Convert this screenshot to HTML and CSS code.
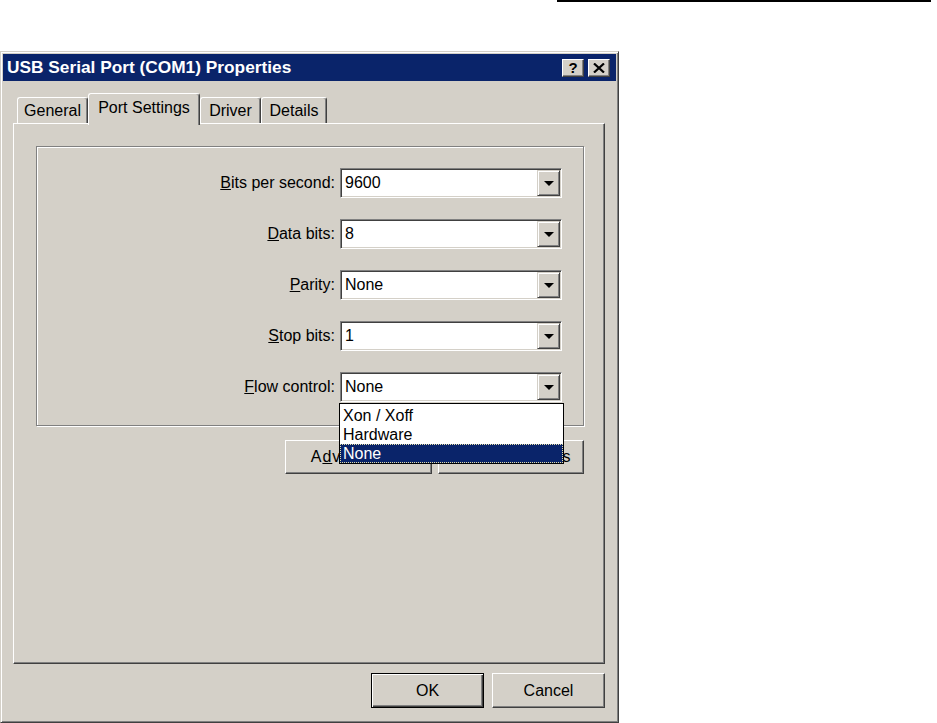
FILE: index.html
```html
<!DOCTYPE html>
<html>
<head>
<meta charset="utf-8">
<title>USB Serial Port (COM1) Properties</title>
<link rel="stylesheet" href="styles.css">
</head>
<body>
<div class="topline"></div>
<div class="dialog">
  <div class="titlebar">
    <span class="title">USB Serial Port (COM1) Properties</span>
    <div class="caption-buttons">
      <div class="cbtn help">?</div>
      <div class="cbtn close">
        <svg width="12" height="10" viewBox="0 0 12 10"><path d="M1 0.5 L11 9.5 M11 0.5 L1 9.5" stroke="#000" stroke-width="2.2" fill="none"/></svg>
      </div>
    </div>
  </div>
  <div class="content">
    <div class="tabs">
      <div class="tab t-general">General</div>
      <div class="tab t-port active">Port Settings</div>
      <div class="tab t-driver">Driver</div>
      <div class="tab t-details">Details</div>
    </div>
    <div class="panel">
      <div class="group">
        <div class="row">
          <span class="label"><u>B</u>its per second:</span>
          <div class="combo"><span class="value">9600</span><div class="drop"></div></div>
        </div>
        <div class="row">
          <span class="label"><u>D</u>ata bits:</span>
          <div class="combo"><span class="value">8</span><div class="drop"></div></div>
        </div>
        <div class="row">
          <span class="label"><u>P</u>arity:</span>
          <div class="combo"><span class="value">None</span><div class="drop"></div></div>
        </div>
        <div class="row">
          <span class="label"><u>S</u>top bits:</span>
          <div class="combo"><span class="value">1</span><div class="drop"></div></div>
        </div>
        <div class="row">
          <span class="label"><u>F</u>low control:</span>
          <div class="combo"><span class="value">None</span><div class="drop"></div>
            <div class="list">
              <div class="item">Xon / Xoff</div>
              <div class="item">Hardware</div>
              <div class="item selected">None</div>
            </div>
          </div>
        </div>
      </div>
      <div class="panel-buttons">
        <div class="btn b-adv">A<u>d</u>vanced...</div>
        <div class="btn b-def"><u>R</u>estore Defaults</div>
      </div>
    </div>
    <div class="dialog-buttons">
      <div class="btn b-ok default">OK</div>
      <div class="btn b-cancel">Cancel</div>
    </div>
  </div>
</div>
</body>
</html>
```
FILE: styles.css
```css
html, body {
  margin: 0;
  padding: 0;
  background: #fff;
}
body {
  width: 937px;
  height: 723px;
  overflow: hidden;
  font-family: "Liberation Sans", Arial, sans-serif;
  font-size: 16px;
  color: #000;
}
.topline {
  margin-left: 557px;
  width: 374px;
  height: 2px;
  background: #000;
}
.dialog {
  margin-top: 49px;
  width: 619px;
  height: 672px;
  box-sizing: border-box;
  background: #d4d0c8;
  border: 1px solid;
  border-color: #d4d0c8 #404040 #404040 #d4d0c8;
  box-shadow: inset 1px 1px 0 #fff, inset -1px -1px 0 #808080;
  padding: 2px;
  display: flex;
  flex-direction: column;
}
.titlebar {
  height: 27px;
  flex: none;
  background: #0a246a;
  display: flex;
  align-items: center;
  padding: 0 6px 0 4px;
}
.title {
  color: #fff;
  font-weight: bold;
  font-size: 17.3px;
  white-space: nowrap;
}
.caption-buttons {
  margin-left: auto;
  display: flex;
  gap: 4px;
}
.cbtn {
  width: 22px;
  height: 18px;
  box-sizing: border-box;
  background: #d4d0c8;
  border: 1px solid;
  border-color: #fff #404040 #404040 #fff;
  box-shadow: inset -1px -1px 0 #808080;
  display: flex;
  align-items: center;
  justify-content: center;
}
.cbtn.help {
  font-weight: bold;
  font-size: 15px;
  line-height: 1;
}
.cbtn svg {
  display: block;
}
.content {
  flex: 1;
  padding: 12px 11px 0 10px;
  display: flex;
  flex-direction: column;
}
.tabs {
  height: 30px;
  flex: none;
  display: flex;
  align-items: flex-end;
  padding-left: 4px;
}
.tab {
  height: 26px;
  box-sizing: border-box;
  border-top: 1px solid #fff;
  border-left: 1px solid #fff;
  border-right: 1px solid #404040;
  box-shadow: inset -1px 0 0 #808080;
  border-radius: 3px 3px 0 0;
  display: flex;
  align-items: center;
  justify-content: center;
  background: #d4d0c8;
  white-space: nowrap;
}
.t-general { width: 71px; }
.t-port { width: 112px; }
.t-driver { width: 61px; }
.t-details { width: 66px; }
.tab.active {
  height: 32px;
  margin-bottom: -2px;
  padding-bottom: 4px;
  position: relative;
  z-index: 1;
}
.panel {
  height: 541px;
  flex: none;
  box-sizing: border-box;
  border: 1px solid;
  border-color: #fff #404040 #404040 #fff;
  box-shadow: inset -1px -1px 0 #808080;
  padding: 22px 0 0 22px;
}
.group {
  width: 548px;
  height: 280px;
  box-sizing: border-box;
  border: 1px solid #808080;
  box-shadow: 1px 1px 0 #fff, inset 1px 1px 0 #fff;
  padding: 21px 21px 0 0;
  display: flex;
  flex-direction: column;
  gap: 21px;
}
.row {
  height: 30px;
  display: flex;
  justify-content: flex-end;
  align-items: center;
}
.label {
  margin-right: 5px;
  white-space: nowrap;
}
.combo {
  position: relative;
  width: 222px;
  height: 30px;
  box-sizing: border-box;
  background: #fff;
  border: 1px solid;
  border-color: #808080 #fff #fff #808080;
  box-shadow: inset 1px 1px 0 #404040, inset -1px -1px 0 #d4d0c8;
  display: flex;
  align-items: center;
  padding-left: 4px;
}
.drop {
  margin: 1px 1px 1px auto;
  width: 23px;
  height: 26px;
  box-sizing: border-box;
  background: #d4d0c8;
  border: 1px solid;
  border-color: #d4d0c8 #404040 #404040 #d4d0c8;
  box-shadow: inset 1px 1px 0 #fff, inset -1px -1px 0 #808080;
  display: flex;
  align-items: center;
  justify-content: center;
}
.drop::after {
  content: "";
  width: 0;
  height: 0;
  border-left: 5px solid transparent;
  border-right: 5px solid transparent;
  border-top: 5px solid #000;
}
.list {
  position: absolute;
  left: -2px;
  top: calc(100% + 2px);
  width: 225px;
  box-sizing: border-box;
  border: 1px solid #000;
  background: #fff;
  padding-top: 2px;
  z-index: 5;
}
.item {
  height: 19px;
  line-height: 19px;
  padding-left: 3px;
  white-space: nowrap;
}
.item.selected {
  background: #0a246a;
  color: #fff;
  outline: 1px dotted #e6dfa8;
  outline-offset: -1px;
}
.panel-buttons {
  width: 548px;
  margin-top: 14px;
  display: flex;
  justify-content: flex-end;
  gap: 6px;
}
.btn {
  height: 34px;
  box-sizing: border-box;
  background: #d4d0c8;
  border: 1px solid;
  border-color: #fff #404040 #404040 #fff;
  box-shadow: inset -1px -1px 0 #808080;
  display: flex;
  align-items: center;
  justify-content: center;
  white-space: nowrap;
}
.b-adv { width: 147px; letter-spacing: 1px; }
.b-def { width: 146px; }
.dialog-buttons {
  margin-top: 9px;
  display: flex;
  justify-content: flex-end;
  gap: 8px;
}
.b-ok, .b-cancel {
  width: 113px;
  height: 35px;
}
.btn.default {
  border: 1px solid #000;
  box-shadow: inset 1px 1px 0 #fff, inset -1px -1px 0 #404040, inset -2px -2px 0 #808080;
}
```
